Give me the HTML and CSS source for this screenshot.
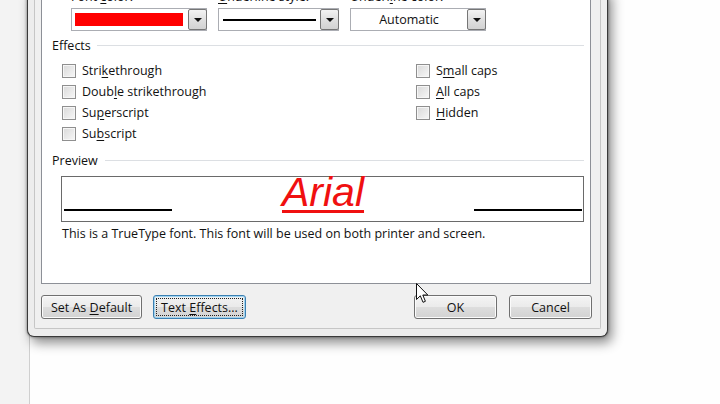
FILE: index.html
```html
<!DOCTYPE html>
<html>
<head>
<meta charset="utf-8">
<link rel="stylesheet" href="styles.css">
</head>
<body>
<div class="dialog">
  <div class="client">
    <div class="panel">
      <div class="combos">
        <div class="field f-color">
          <div class="label">Font <u>c</u>olor:</div>
          <div class="combo"><span class="swatch"></span><span class="drop"></span></div>
        </div>
        <div class="field f-style">
          <div class="label"><u>U</u>nderline style:</div>
          <div class="combo"><span class="uline"></span><span class="drop"></span></div>
        </div>
        <div class="field f-ucolor">
          <div class="label">Underl<u>i</u>ne color:</div>
          <div class="combo"><span class="value">Automatic</span><span class="drop"></span></div>
        </div>
      </div>

      <div class="group-head"><span>Effects</span><i class="rule"></i></div>
      <div class="effects">
        <div class="check"><span class="box"></span><span>Stri<u>k</u>ethrough</span></div>
        <div class="check"><span class="box"></span><span>S<u>m</u>all caps</span></div>
        <div class="check"><span class="box"></span><span>Doub<u>l</u>e strikethrough</span></div>
        <div class="check"><span class="box"></span><span><u>A</u>ll caps</span></div>
        <div class="check"><span class="box"></span><span>Su<u>p</u>erscript</span></div>
        <div class="check"><span class="box"></span><span><u>H</u>idden</span></div>
        <div class="check"><span class="box"></span><span>Su<u>b</u>script</span></div>
      </div>

      <div class="group-head preview-head"><span>Preview</span><i class="rule"></i></div>
      <div class="preview">
        <span class="pline left"></span>
        <span class="sample">Arial</span>
        <span class="pline right"></span>
      </div>
      <p class="note">This is a TrueType font. This font will be used on both printer and screen.</p>
    </div>

    <div class="buttons">
      <button class="btn b-default"><span>Set As <u>D</u>efault</span></button>
      <button class="btn b-effects focused"><span class="focus"><span>Text <u>E</u>ffects...</span></span></button>
      <span class="spacer"></span>
      <button class="btn b-ok"><span>OK</span></button>
      <button class="btn b-cancel"><span>Cancel</span></button>
    </div>
  </div>
</div>

<svg class="cursor" width="13" height="21" viewBox="0 0 13 21">
  <path d="M0.5 0.5 L0.5 16.5 L4.3 12.8 L7 19.3 L9.4 18.3 L6.8 12 L11.8 12 Z" fill="#fff" stroke="#111" stroke-width="1" stroke-linejoin="round"/>
</svg>
</body>
</html>
```

FILE: styles.css
```css
html, body {
  margin: 0;
  padding: 0;
}
body {
  width: 720px;
  height: 404px;
  overflow: hidden;
  background: linear-gradient(to right, #f3f3f3 0, #f3f3f3 29px, #cfcfcf 29px, #cfcfcf 30px, #fefefe 30px);
  font-family: "Open Sans", "Noto Sans", sans-serif;
  font-size: 12.5px;
  line-height: 15px;
  color: #111;
  display: flow-root;
}
u { text-decoration: underline; text-underline-offset: 2px; }

.dialog {
  margin: -11px 0 0 27px;
  width: 581px;
  box-sizing: border-box;
  background: #ededed;
  border: 1px solid #3a3a3a;
  border-top: none;
  border-radius: 0 0 7px 7px;
  padding: 0 6px 7px 6px;
  box-shadow: 4px 6px 12px rgba(0, 0, 0, 0.45), 0 0 3px rgba(0, 0, 0, 0.5);
}
.client {
  background: #f0f0f0;
  border: 1px solid #c6c6c6;
  border-top: none;
  border-radius: 0 0 2px 2px;
  padding: 0 9px 9px 6px;
}
.panel {
  background: #fff;
  border: 1px solid #8d9097;
  border-top: none;
  height: 295px;
  box-sizing: border-box;
  padding: 0 6px 0 10px;
}

/* combos */
.combos {
  display: flex;
  gap: 11px;
  padding-left: 19px;
}
.field { display: flex; flex-direction: column; gap: 4px; }
.label { height: 15px; white-space: nowrap; }
.combo {
  height: 23px;
  box-sizing: border-box;
  border: 1px solid #abadb3;
  background: #fff;
  display: flex;
  align-items: center;
}
.f-color .combo { width: 136px; }
.f-style .combo { width: 121px; }
.f-ucolor .combo { width: 136px; }
.swatch {
  width: 108px;
  height: 13px;
  margin-left: 3px;
  background: #ff0000;
}
.uline {
  width: 93px;
  height: 2px;
  margin-left: 4px;
  background: #000;
}
.value {
  flex: 1;
  text-align: center;
}
.drop {
  margin-left: auto;
  margin-right: -1px;
  width: 19px;
  height: 21px;
  box-sizing: border-box;
  border: 1px solid #767676;
  border-radius: 2px;
  background: linear-gradient(#f3f3f3, #e0e0e0 50%, #d2d2d2);
  display: flex;
  align-items: center;
  justify-content: center;
}
.drop::after {
  content: "";
  border-left: 4px solid transparent;
  border-right: 4px solid transparent;
  border-top: 4px solid #111;
  margin-top: 1px;
}

/* group headers */
.group-head {
  display: flex;
  align-items: center;
  gap: 6px;
  margin-top: 7px;
  height: 15px;
}
.rule {
  flex: 1;
  height: 1px;
  background: #dcdfe3;
}
.preview-head { margin-top: 9px; gap: 7px; }

/* checkboxes */
.effects {
  display: grid;
  grid-template-columns: 354px auto;
  grid-auto-rows: 21px;
  padding-left: 10px;
  margin-top: 7px;
}
.check {
  display: flex;
  align-items: center;
  gap: 6px;
  white-space: nowrap;
}
.box {
  width: 14px;
  height: 14px;
  box-sizing: border-box;
  border: 1px solid #8f8f8f;
  background: linear-gradient(135deg, #d9d9d9, #f7f7f7);
  box-shadow: inset 0 0 0 1px #f6f6f6;
  flex: none;
}

/* preview */
.preview {
  margin: 8px 0 0 9px;
  height: 46px;
  box-sizing: border-box;
  border: 1px solid #6a6a6a;
  display: flex;
  padding: 0 1px 0 2px;
}
.pline {
  align-self: flex-end;
  width: 108px;
  height: 2px;
  margin-bottom: 10px;
  background: #000;
}
.sample {
  flex: 1;
  text-align: center;
  font-family: "Liberation Sans", Arial, sans-serif;
  font-style: italic;
  font-size: 41px;
  line-height: 41px;
  margin-top: -5px;
  color: #f01010;
  text-decoration: underline;
  text-decoration-thickness: 3px;
  text-underline-offset: 4px;
}
.note {
  margin: 4px 0 0 10px;
  white-space: nowrap;
}

/* buttons */
.buttons {
  display: flex;
  gap: 11px;
  margin-top: 11px;
  margin-right: -1px;
}
.spacer { flex: 1; }
.btn {
  height: 24px;
  box-sizing: border-box;
  border: 1px solid #707070;
  border-radius: 3px;
  background: linear-gradient(#f4f4f4, #ebebeb 48%, #dddddd 52%, #d2d2d2);
  box-shadow: inset 0 0 0 1px #fbfbfb;
  font: inherit;
  color: #111;
  padding: 0;
  display: flex;
  align-items: center;
  justify-content: center;
  white-space: nowrap;
}
.b-default { width: 101px; }
.b-effects { width: 93px; padding: 2px; }
.b-ok { width: 83px; margin-right: 1px; }
.b-cancel { width: 83px; }
.focused {
  border-color: #3c7fb1;
  box-shadow: inset 0 0 0 1px #9fd4f1;
  background: linear-gradient(#f2f2f2, #eaeaea 48%, #dcdcdc 52%, #d4d4d4);
}
.focus {
  flex: 1;
  align-self: stretch;
  border: 1px dotted #222;
  display: flex;
  align-items: center;
  justify-content: center;
}

.cursor {
  position: absolute;
  left: 416px;
  top: 283px;
}
```
